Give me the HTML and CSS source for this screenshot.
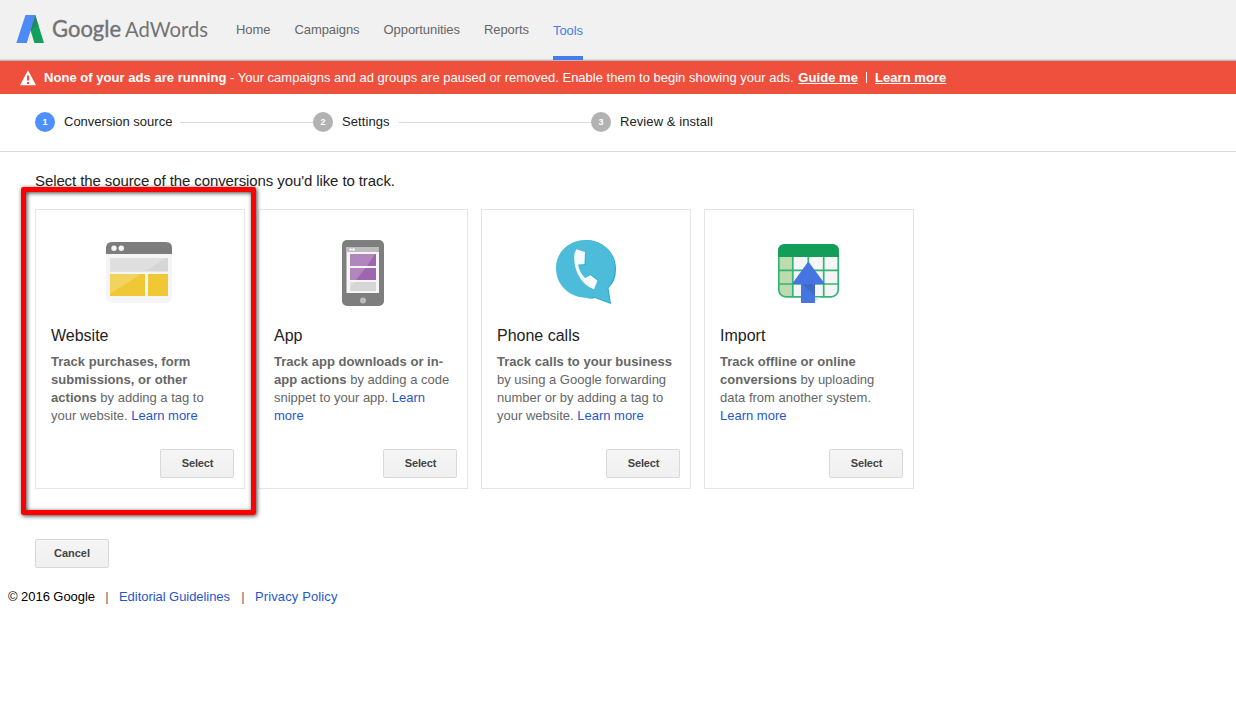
FILE: index.html
```html
<!DOCTYPE html>
<html lang="en">
<head>
<meta charset="utf-8">
<title>Google AdWords</title>
<link rel="stylesheet" href="styles.css">
</head>
<body>
<header class="topbar">
  <svg class="logo" width="194" height="36" viewBox="0 0 194 36" role="img" aria-label="Google AdWords">
    <path d="M18 3H19.200L28 31H18.400L13.500 15Z" fill="#13a05c"/>
    <path d="M18 3H19.200L22.500 13.500L14.500 19L12.500 13Z" fill="#218c59"/>
    <path d="M9.500 3H19.200L10.800 31H0.300Z" fill="#4c8bf5"/>
    <text x="36" y="24.500" class="word word-google" textLength="69" lengthAdjust="spacingAndGlyphs">Google</text>
    <text x="109" y="24.500" class="word word-adwords" textLength="83" lengthAdjust="spacingAndGlyphs">AdWords</text>
  </svg>
  <nav class="nav">
    <a class="nav-item">Home</a>
    <a class="nav-item">Campaigns</a>
    <a class="nav-item">Opportunities</a>
    <a class="nav-item">Reports</a>
    <a class="nav-item active">Tools</a>
  </nav>
</header>
<div class="alert">
  <svg class="warn" width="16" height="16" viewBox="0 0 16 16"><path d="M8 0.300L16 15.300H0Z" fill="#fff"/><path d="M7 5.500H9.200V10.500H7ZM7 12H9.200V14H7Z" fill="#ef503e"/></svg>
  <p class="alert-text"><b>None of your ads are running</b> - Your campaigns and ad groups are paused or removed. Enable them to begin showing your ads. <a class="alert-link">Guide me</a><span class="pipe"></span><a class="alert-link">Learn more</a></p>
</div>
<ol class="steps">
  <li class="step current"><span class="num">1</span><span>Conversion source</span><span class="line"></span></li>
  <li class="step"><span class="num">2</span><span class="loose">Settings</span><span class="line"></span></li>
  <li class="step"><span class="num">3</span><span class="loose">Review &amp; install</span></li>
</ol>
<main class="main">
  <h1 class="title">Select the source of the conversions you'd like to track.</h1>
  <div class="cards">
    <section class="card">
      <div class="highlight"></div>
      <svg class="art" width="72" height="72" viewBox="0 0 72 72">
        <rect x="3" y="5" width="66" height="61" rx="7" fill="#f5f5f5"/>
        <path d="M3 17V11Q3 5 9 5H63Q69 5 69 11V17Z" fill="#7d7d7d"/>
        <circle cx="11" cy="11.300" r="2.700" fill="#f5f5f5"/><circle cx="18.300" cy="11.300" r="2.700" fill="#f5f5f5"/>
        <path d="M7 21H65V34.500H7Z" fill="#d6d6d6"/><path d="M7 21H63L42 34.500H7Z" fill="#dfdfdf"/>
        <path d="M7 37H42V59H7ZM45 37H65V59H45Z" fill="#f0c835"/><path d="M7 37H38L7 57Z" fill="#f2d35d"/>
      </svg>
      <h2 class="name">Website</h2>
      <p class="desc"><b>Track purchases, form submissions, or other actions</b> by adding a tag to your website. <a class="link">Learn more</a></p>
      <button class="btn">Select</button>
    </section>
    <section class="card">
      <svg class="art" width="72" height="72" viewBox="0 0 72 72">
        <rect x="16" y="3" width="42" height="66" rx="5" fill="#7e7e7e"/>
        <path d="M20.500 10H53V56H20.500Z" fill="#f5f5f5"/><path d="M20.500 10H53V15H20.500Z" fill="#b5b5b5"/><path d="M20.500 10H53L50 15H20.500Z" fill="#bdbdbd"/>
        <circle cx="24.500" cy="12.500" r="1.200" fill="#fff"/><circle cx="27.500" cy="12.500" r="1.200" fill="#fff"/>
        <path d="M24 17H50V29H24ZM24 31H50V43H24Z" fill="#9e66ae"/>
        <path d="M24 17H49L41 29H24ZM24 31H39.500L30 43H24Z" fill="#b186bd"/>
        <path d="M24 45H50V54H24Z" fill="#d6d6d6"/><path d="M24 45H29L24 51Z" fill="#dfdfdf"/>
        <circle cx="37" cy="63.500" r="3" fill="#bdbdbd"/>
      </svg>
      <h2 class="name">App</h2>
      <p class="desc"><b>Track app downloads or in-app actions</b> by adding a code snippet to your app. <a class="link">Learn more</a></p>
      <button class="btn">Select</button>
    </section>
    <section class="card">
      <svg class="art" width="72" height="72" viewBox="0 0 72 72">
        <path d="M37 3C53 3 67 15 67 32Q67 44 59.500 51L62 67L46 61Q42 62 38 61Z" fill="#1aa7cb"/>
        <path d="M36 3C53 3 66 15 66 31Q66 43 58.500 51L61 65.500L46 60.300C25 64 7 51 7 31C7 15 20 3 36 3Z" fill="#4dbcda"/>
        <path d="M35.500 27.500L36.500 15L36.500 27.800L30.500 28.500ZM36 41L41.500 37L49 43L48.500 44L42 39Z" fill="#1aa7cb"/>
        <path d="M27.300 12.200L36 15L35.500 27L29 27.500Q30.500 35.500 36 41L41.500 38L48.500 43.500L45 52.300Q35 49 29 37.500Q24 27 25.500 16.500Z" fill="#f5fbfd"/>
      </svg>
      <h2 class="name">Phone calls</h2>
      <p class="desc"><b>Track calls to your business</b> by using a Google forwarding number or by adding a tag to your website. <a class="link">Learn more</a></p>
      <button class="btn">Select</button>
    </section>
    <section class="card">
      <svg class="art" width="72" height="72" viewBox="0 0 72 72">
        <rect x="6.800" y="7.800" width="59.400" height="52" rx="7" fill="#f5f5f5"/>
        <path d="M7 19H20V60H14Q7 60 7 53Z" fill="#bddbac"/>
        <path d="M20.800 19V60M36.300 19V60M51.700 19V60M7 33.300H66M7 47H66" stroke="#31b579" stroke-width="1.700" fill="none"/>
        <rect x="6.800" y="7.800" width="59.400" height="52" rx="7" fill="none" stroke="#31b579" stroke-width="1.700"/>
        <path d="M6 20V14Q6 7 13 7H60Q67 7 67 14V20Z" fill="#129e59"/>
        <path d="M42.500 60.500L48.500 60.500L42.500 65Z" fill="#dfe7fa"/>
        <path d="M36.300 24.500L53 47H43V66H29V47H20Z" fill="#4675e2"/><path d="M30 47H43V59Z" fill="#4068c6"/>
      </svg>
      <h2 class="name">Import</h2>
      <p class="desc"><b>Track offline or online conversions</b> by uploading data from another system. <a class="link">Learn more</a></p>
      <button class="btn">Select</button>
    </section>
  </div>
  <button class="btn cancel">Cancel</button>
</main>
<footer class="footer"><span class="copyright">© 2016 Google</span><span class="bar">|</span><a class="link guidelines">Editorial Guidelines</a><span class="bar">|</span><a class="link privacy">Privacy Policy</a></footer>
</body>
</html>
```
FILE: styles.css
```css
* { box-sizing: border-box; }
body { margin: 0; background: #fff; color: #222; font: 13px/18px "Liberation Sans", Arial, sans-serif; overflow: hidden; }
p, h1, h2, ol { margin: 0; padding: 0; }
.topbar { display: flex; height: 61px; background: #f1f1f1; border-bottom: 1px solid #b9bcbc; padding-left: 16px; box-shadow: inset 0 -1px #dadada; }
.logo { flex: none; margin-top: 12px; margin-right: 26px; overflow: visible; }
.word { font-family: Lato, sans-serif; fill: #737373; }
.word-google { font-size: 22.5px; stroke: #737373; stroke-width: 0.400px; }
.word-adwords { font-size: 22px; }
.nav { display: flex; gap: 24px; color: #666; letter-spacing: -0.070px; }
.nav-item { height: 60px; padding-top: 21px; }
.nav-item.active { color: #427fed; padding-top: 22px; border-bottom: 4px solid #427fed; }
.alert { display: flex; height: 33px; background: #ef503e; color: #fff; padding-left: 20px; }
.warn { flex: none; margin: 9px 8px 0 0; }
.alert-text { padding-top: 8px; white-space: nowrap; }
.alert-text b { letter-spacing: 0.040px; }
.alert-link { font-weight: bold; text-decoration: underline; letter-spacing: 0.050px; }
.alert-link:first-of-type { margin-left: 1px; }
.pipe { display: inline-block; width: 1px; height: 11px; background: #fff; margin: 0 8px; vertical-align: -1px; }
.steps { display: flex; list-style: none; height: 58px; padding: 0 0 2px 35px; border-bottom: 1px solid #dadada; }
.step { display: flex; align-items: center; width: 278px; }
.loose { letter-spacing: 0.080px; }
.num { flex: none; width: 20px; height: 20px; border-radius: 50%; background: #b2b2b2; color: #fff; font-size: 9px; font-weight: bold; line-height: 20px; text-align: center; margin: 1px 9px 0 0; }
.current .num { background: #4d90fe; }
.line { flex: 1; height: 1px; margin: 2px 0 0 8px; background: #d9d9d9; }
.main { padding: 20px 35px 0; }
.title { font-size: 15px; font-weight: normal; line-height: 18px; letter-spacing: -0.100px; }
.cards { display: flex; gap: 13px; margin-top: 19px; }
.card { position: relative; display: flex; flex-direction: column; width: 210px; height: 280px; border: 1px solid #e5e5e5; padding: 27px 10px 10px 15px; }
.art { flex: none; margin-left: 52px; }
.name { margin-top: 17px; font-size: 16px; font-weight: normal; line-height: 20px; }
.desc { width: 178px; margin-top: 7px; color: #666; }
.desc b { letter-spacing: 0.030px; }
.link { color: #1f57cc; }
.btn { width: 74px; height: 29px; flex: none; padding: 0; margin: auto 0 0 auto; border: 1px solid #d9d9d9; border-radius: 2px; background: linear-gradient(#f5f5f5, #f0f0f0); color: #444; font: bold 11px/27px "Liberation Sans", Arial, sans-serif; }
.card .btn { padding-left: 1px; letter-spacing: -0.150px; }
.cancel { display: block; margin: 50px 0 0; }
.highlight { position: absolute; left: -15px; top: -23px; width: 235px; height: 328px; border: 5px solid #f00; border-radius: 2px; box-shadow: 1px 1px 4px rgba(0,0,0,.75), inset 1px 1px 4px rgba(0,0,0,.75); pointer-events: none; z-index: 1; }
.footer { display: flex; margin-top: 20px; padding-left: 8px; color: #000; }
.copyright { width: 87px; letter-spacing: -0.050px; white-space: nowrap; }
.guidelines { width: 112px; letter-spacing: -0.050px; white-space: nowrap; }
.privacy { letter-spacing: 0.120px; }
.bar { width: 24px; text-align: center; color: #666; }
```
